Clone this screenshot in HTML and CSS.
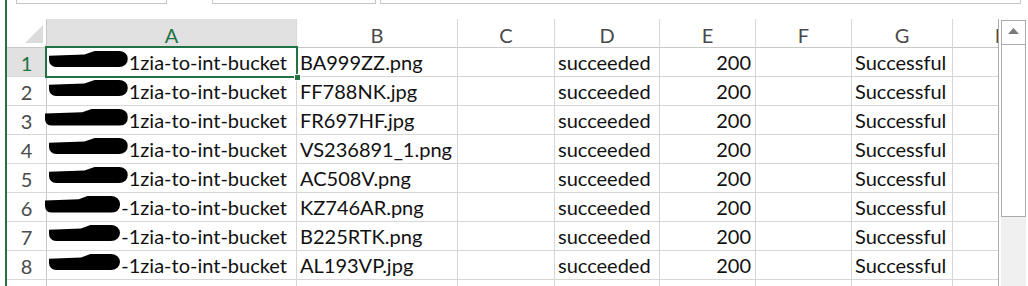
FILE: index.html
```html
<!DOCTYPE html>
<html>
<head>
<meta charset="utf-8">
<link rel="stylesheet" href="styles.css">
</head>
<body>
<div class="app">
  <div class="edge"></div>
  <div class="main">
    <div class="toolbar">
      <div class="box b1"></div>
      <div class="box b2"></div>
      <div class="box b3"></div>
    </div>
    <div class="workarea">
      <div class="sheet">
        <div class="corner"></div>
        <div class="ch sel">A</div>
        <div class="ch">B</div>
        <div class="ch">C</div>
        <div class="ch">D</div>
        <div class="ch">E</div>
        <div class="ch">F</div>
        <div class="ch">G</div>
        <div class="ch">H</div>

        <div class="rh sel">1</div>
        <div class="c a active"><span class="blob"></span><span class="t">1zia-to-int-bucket</span></div>
        <div class="c">BA999ZZ.png</div><div class="c"></div><div class="c">succeeded</div><div class="c num">200</div><div class="c"></div><div class="c">Successful</div><div class="c"></div>

        <div class="rh">2</div>
        <div class="c a"><span class="blob"></span><span class="t">1zia-to-int-bucket</span></div>
        <div class="c">FF788NK.jpg</div><div class="c"></div><div class="c">succeeded</div><div class="c num">200</div><div class="c"></div><div class="c">Successful</div><div class="c"></div>

        <div class="rh">3</div>
        <div class="c a"><span class="blob wide"></span><span class="t">1zia-to-int-bucket</span></div>
        <div class="c">FR697HF.jpg</div><div class="c"></div><div class="c">succeeded</div><div class="c num">200</div><div class="c"></div><div class="c">Successful</div><div class="c"></div>

        <div class="rh">4</div>
        <div class="c a"><span class="blob"></span><span class="t">1zia-to-int-bucket</span></div>
        <div class="c">VS236891_1.png</div><div class="c"></div><div class="c">succeeded</div><div class="c num">200</div><div class="c"></div><div class="c">Successful</div><div class="c"></div>

        <div class="rh">5</div>
        <div class="c a"><span class="blob"></span><span class="t">1zia-to-int-bucket</span></div>
        <div class="c">AC508V.png</div><div class="c"></div><div class="c">succeeded</div><div class="c num">200</div><div class="c"></div><div class="c">Successful</div><div class="c"></div>

        <div class="rh">6</div>
        <div class="c a"><span class="blob wide"></span><span class="t">-1zia-to-int-bucket</span></div>
        <div class="c">KZ746AR.png</div><div class="c"></div><div class="c">succeeded</div><div class="c num">200</div><div class="c"></div><div class="c">Successful</div><div class="c"></div>

        <div class="rh">7</div>
        <div class="c a"><span class="blob"></span><span class="t">-1zia-to-int-bucket</span></div>
        <div class="c">B225RTK.png</div><div class="c"></div><div class="c">succeeded</div><div class="c num">200</div><div class="c"></div><div class="c">Successful</div><div class="c"></div>

        <div class="rh">8</div>
        <div class="c a"><span class="blob"></span><span class="t">-1zia-to-int-bucket</span></div>
        <div class="c">AL193VP.jpg</div><div class="c"></div><div class="c">succeeded</div><div class="c num">200</div><div class="c"></div><div class="c">Successful</div><div class="c"></div>

        <div class="rh"></div>
        <div class="c"></div><div class="c"></div><div class="c"></div><div class="c"></div><div class="c"></div><div class="c"></div><div class="c"></div><div class="c"></div>
      </div>
      <div class="vline"></div>
      <div class="scroll">
        <div class="up"><svg width="11" height="6" viewBox="0 0 11 6"><path d="M0 6 L5.5 0 L11 6 Z" fill="#7a7a7a"/></svg></div>
        <div class="thumb"></div>
        <div class="track"></div>
      </div>
    </div>
  </div>
</div>
</body>
</html>
```

FILE: styles.css
```css
html, body {
  margin: 0;
  padding: 0;
  background: #ffffff;
  width: 1028px;
  height: 286px;
  overflow: hidden;
}

.app {
  display: flex;
  height: 286px;
  font-family: Lato, "Open Sans", sans-serif;
}

.edge {
  margin-left: 5px;
  width: 2px;
  background: #217346;
  flex: none;
}

.main {
  display: flex;
  flex-direction: column;
  flex: 1;
  min-width: 0;
}

.toolbar {
  display: flex;
  height: 19px;
  flex: none;
}

.box {
  height: 4px;
  box-sizing: border-box;
  border: 1px solid #c6c6c6;
  border-top: none;
}

.b1 { margin-left: 9px; width: 151px; }
.b2 { margin-left: 45px; width: 164px; }
.b3 { margin-left: 4px; width: 641px; }

.workarea {
  display: flex;
  flex: 1;
  min-height: 0;
}

.sheet {
  width: 991px;
  flex: none;
  overflow: hidden;
  display: grid;
  grid-template-columns: 40px 250px 161px 97px 105px 96px 96px 101px 100px;
  grid-auto-rows: 29px;
  align-content: start;
}

.corner {
  position: relative;
  border-right: 1px solid #c8c8c8;
  border-bottom: 1px solid #c8c8c8;
  box-sizing: border-box;
}

.corner::after {
  content: "";
  position: absolute;
  left: 18px;
  top: 6px;
  width: 18px;
  height: 18px;
  background: #dcdcdc;
  clip-path: polygon(100% 0, 100% 100%, 0 100%);
}

.ch {
  box-sizing: border-box;
  border-right: 1px solid #d8d8d8;
  border-bottom: 1px solid #c8c8c8;
  display: flex;
  align-items: center;
  justify-content: center;
  padding-top: 3px;
  font-size: 20px;
  color: #4a4a4a;
}

.ch.sel {
  background: #e1e1e1;
  color: #217346;
}

.rh {
  box-sizing: border-box;
  border-right: 1px solid #c8c8c8;
  border-bottom: 1px solid #d8d8d8;
  display: flex;
  align-items: center;
  justify-content: center;
  padding-top: 1px;
  font-size: 20px;
  color: #4a4a4a;
}

.rh.sel {
  background: #e1e1e1;
  color: #217346;
}

.c {
  box-sizing: border-box;
  border-right: 1px solid #d6d6d6;
  border-bottom: 1px solid #d6d6d6;
  display: flex;
  align-items: center;
  padding: 0 3px 0 3px;
  font-size: 20px;
  color: #111111;
  white-space: nowrap;
  overflow: hidden;
}

.c.num {
  justify-content: flex-end;
  padding-right: 4px;
}

.c.a {
  padding-left: 2px;
  padding-right: 9px;
  overflow: visible;
}

.c.active {
  position: relative;
}

.c.active::before {
  content: "";
  position: absolute;
  left: -2px;
  top: -2px;
  right: -2px;
  bottom: -2px;
  border: 2px solid #217346;
  pointer-events: none;
}

.c.active::after {
  content: "";
  position: absolute;
  right: -5px;
  bottom: -5px;
  width: 5px;
  height: 5px;
  background: #217346;
  border: 1px solid #ffffff;
}

.blob {
  flex: 1;
  height: 16px;
  margin-top: -6px;
  margin-right: 1px;
  background: #000000;
  border-radius: 6px 9px 9px 7px / 5px 8px 8px 7px;
  clip-path: polygon(0 30%, 45% 22%, 58% 0, 100% 0, 100% 100%, 0 100%);
}

.blob.wide {
  margin-left: -4px;
  height: 17px;
}

.t {
  flex: none;
}

.vline {
  width: 1px;
  background: #ababab;
  flex: none;
}

.scroll {
  margin-left: 2px;
  width: 25px;
  flex: none;
  margin-top: 1px;
  display: flex;
  flex-direction: column;
}

.up {
  height: 25px;
  box-sizing: border-box;
  border: 1px solid #ababab;
  display: flex;
  align-items: center;
  justify-content: center;
  padding-bottom: 4px;
}

.thumb {
  height: 172px;
  box-sizing: border-box;
  border: 1px solid #ababab;
  border-top: none;
  background: #ffffff;
}

.track {
  flex: 1;
  background: #f0f0f0;
}
```
